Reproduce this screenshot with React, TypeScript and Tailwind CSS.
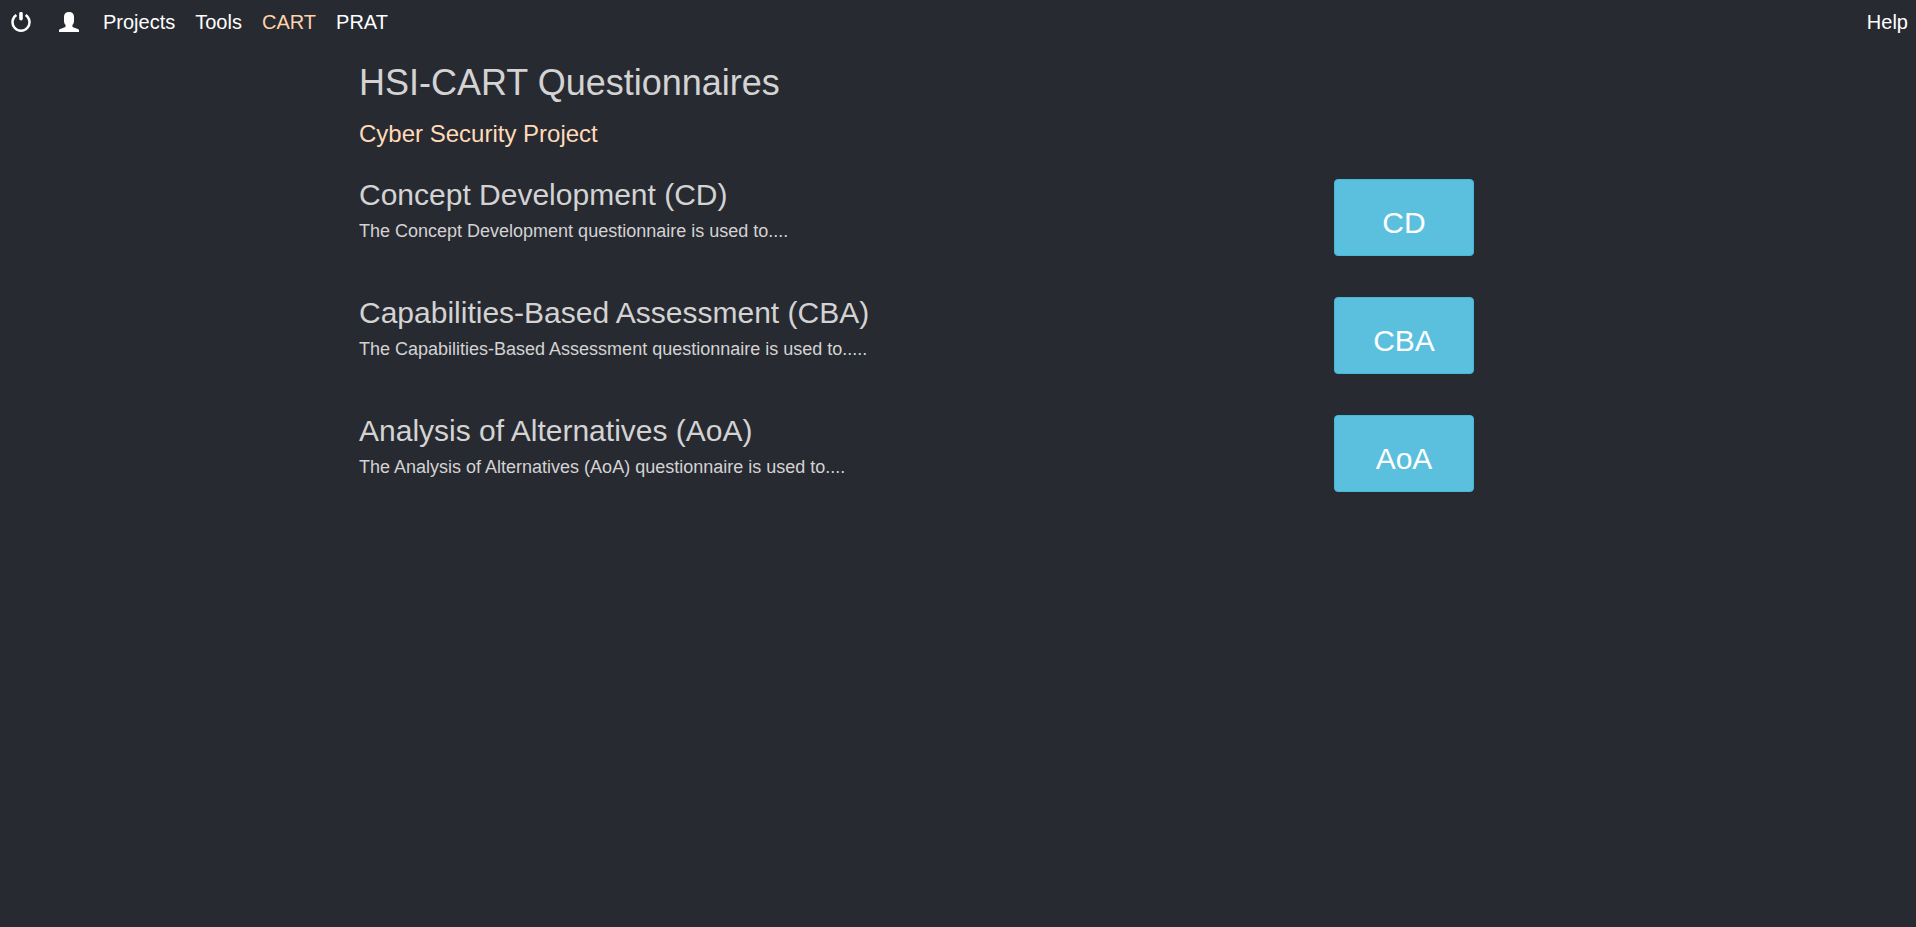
const questionnaires = [
  { code: 'CD', title: 'Concept Development (CD)', text: 'The Concept Development questionnaire is used to....' },
  { code: 'CBA', title: 'Capabilities-Based Assessment (CBA)', text: 'The Capabilities-Based Assessment questionnaire is used to.....' },
  { code: 'AoA', title: 'Analysis of Alternatives (AoA)', text: 'The Analysis of Alternatives (AoA) questionnaire is used to....' },
];

function PowerIcon() {
  return (
    <svg viewBox="0 0 20 20" className="block size-5" fill="none" stroke="currentColor" aria-hidden="true">
      <path d="M5.400 3A8.500 8.500 0 1 0 14.600 3" strokeWidth="2.500" />
      <path d="M10 1.700v5" strokeWidth="3.600" strokeLinecap="round" />
    </svg>
  );
}

function UserIcon() {
  return (
    <svg viewBox="0 0 20 20" className="block size-5" fill="currentColor" aria-hidden="true">
      <path d="M10 0C6.800 0 5 1.800 5 4.800V9c0 1.700.6 3 1.600 3.900v1c0 .7-.5 1.200-1.400 1.600L1.200 17.100C.3 17.500 0 18 0 18.700V20h20v-1.300c0-.7-.3-1.200-1.200-1.600l-4-1.600c-.9-.4-1.400-.9-1.400-1.600v-1C14.400 12 15 10.700 15 9V4.800C15 1.800 13.200 0 10 0z" />
    </svg>
  );
}

export default function App() {
  return (
    <div className="min-h-screen bg-[#282a31] font-['Liberation_Sans',Arial,sans-serif] text-lg text-[#d3d3d3]">
      <nav className="flex h-12 items-center justify-between pr-2 pb-1 pl-[11px] text-xl text-white">
        <div className="flex items-center gap-5">
          <a href="#logout" aria-label="Log out" className="mr-2"><PowerIcon /></a>
          <a href="#account" aria-label="Account" className="mr-1"><UserIcon /></a>
          <a href="#projects">Projects</a>
          <a href="#tools">Tools</a>
          <a href="#cart" className="text-[#ffd2ac]">CART</a>
          <a href="#prat">PRAT</a>
        </div>
        <a href="#help">Help</a>
      </nav>
      <main className="mx-auto w-full max-w-[1200px] pr-[84px] pl-px">
        <h1 className="pt-[15px] text-4xl">HSI-CART Questionnaires</h1>
        <h3 className="pt-[15px] text-2xl text-[#ffdab9]">Cyber Security Project</h3>
        <div className="flex flex-col gap-[41px] pt-[29px]">
          {questionnaires.map((q) => (
            <section key={q.code} className="flex items-start justify-between">
              <div>
                <h2 className="text-3xl/8">{q.title}</h2>
                <p className="mt-1.5">{q.text}</p>
              </div>
              <button type="button" className="h-[77px] w-[140px] rounded-sm border border-[#46b8da] bg-[#5bc0de] pt-2.5 text-3xl text-white">
                {q.code}
              </button>
            </section>
          ))}
        </div>
      </main>
    </div>
  );
}
